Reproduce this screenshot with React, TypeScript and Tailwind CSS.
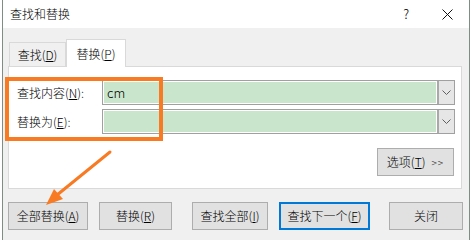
import React from "react";

const font = { fontFamily: '"Noto Sans CJK SC", "Noto Sans", sans-serif' };

const Btn: React.FC<{
  label: string;
  keyChar?: string;
  className?: string;
  primary?: boolean;
}> = ({ label, keyChar, className = "", primary }) => (
  <div
    className={`h-[28px] flex items-center justify-center bg-[#e1e1e1] text-[12px] text-black ${
      primary ? "border-2 border-[#0078d7]" : "border border-[#adadad]"
    } ${className}`}
  >
    <span>
      {label}
      {keyChar && (
        <>
          (<u>{keyChar}</u>)
        </>
      )}
    </span>
  </div>
);

const Combo: React.FC<{ value?: string }> = ({ value }) => (
  <div className="flex-1 h-[25px] flex border border-[#a0a0a0] bg-white">
    <div className="flex-1 m-px bg-[#c9e6cc] flex items-center pl-[3px] text-[13px] text-black">
      {value}
    </div>
    <div className="w-[17px] bg-[#e6e6e6] border-l-2 border-[#a9a9a9] flex items-center justify-center">
      <svg width="9" height="5" viewBox="0 0 9 5">
        <path d="M0.5 0.5 L4.5 4.5 L8.5 0.5" fill="none" stroke="#606060" strokeWidth="1" />
      </svg>
    </div>
  </div>
);

export default function App() {
  return (
    <div className="relative w-[472px] h-[240px] bg-white overflow-hidden font-light" style={font}>
      <div className="ml-[2px] w-[468px] h-[240px] border-x border-[#7f8e83] bg-[#f0f0f0] flex flex-col">
        {/* title bar */}
        <div className="h-[28px] bg-white flex items-center pl-[7px] shrink-0">
          <span className="text-[12px] text-black">查找和替换</span>
          <span className="ml-auto text-[13px] text-black mr-[33px]">?</span>
          <svg width="11" height="11" viewBox="0 0 11 11" className="mr-[16px]">
            <path d="M0.5 0.5 L10.5 10.5 M10.5 0.5 L0.5 10.5" stroke="#111" strokeWidth="1" />
          </svg>
        </div>

        {/* tabs */}
        <div className="flex items-end h-[38px] pl-[6px] shrink-0">
          <div className="w-[57px] h-[24px] border border-b-0 border-[#d9d9d9] bg-[#f0f0f0] flex items-center justify-center text-[12px] text-black">
            <span>
              查找(<u>D</u>)
            </span>
          </div>
          <div className="w-[60px] h-[28px] -mb-px relative z-10 border border-b-0 border-[#d9d9d9] bg-white flex items-center justify-center text-[12px] text-black">
            <span>
              替换(<u>P</u>)
            </span>
          </div>
        </div>

        {/* panel */}
        <div className="ml-[5px] mr-[7px] h-[123px] bg-white border border-[#d9d9d9] flex flex-col pl-[8px] pr-[6px] pt-[13px] shrink-0">
          <div className="flex items-center gap-[8px]">
            <span className="w-[77px] text-[12px] text-black">
              查找内容(<u>N</u>):
            </span>
            <Combo value="cm" />
          </div>
          <div className="flex items-center gap-[8px] mt-[4px]">
            <span className="w-[77px] text-[12px] text-black">
              替换为(<u>E</u>):
            </span>
            <Combo />
          </div>
          <div className="flex justify-end mt-[14px] pr-px">
            <div className="w-[77px] h-[28px] bg-[#e1e1e1] border border-[#adadad] flex items-center justify-center text-[12px] text-black">
              <span>
                选项(<u>T</u>)
                <span className="ml-[6px] text-[10px] tracking-[1px]">&gt;&gt;</span>
              </span>
            </div>
          </div>
        </div>

        {/* buttons */}
        <div className="flex mt-[13px]">
          <Btn label="全部替换" keyChar="A" className="ml-[5px] w-[80px]" />
          <Btn label="替换" keyChar="R" className="ml-[11px] w-[73px]" />
          <Btn label="查找全部" keyChar="I" className="ml-[20px] w-[76px]" />
          <Btn label="查找下一个" keyChar="F" className="ml-[11px] w-[91px]" primary />
          <Btn label="关闭" className="ml-[19px] w-[74px]" />
        </div>
      </div>

      {/* annotation: orange frame */}
      <div className="absolute left-[5px] top-[77px] w-[158px] h-[64px] border-[4px] border-[#f87b24]" />

      {/* annotation: arrow */}
      <svg className="absolute left-0 top-0" width="472" height="240" viewBox="0 0 472 240">
        <line x1="110" y1="152" x2="57" y2="195" stroke="#f87b24" strokeWidth="3" strokeLinecap="round" />
        <polygon points="46,205 63,199 54,189" fill="#f87b24" />
      </svg>
    </div>
  );
}
